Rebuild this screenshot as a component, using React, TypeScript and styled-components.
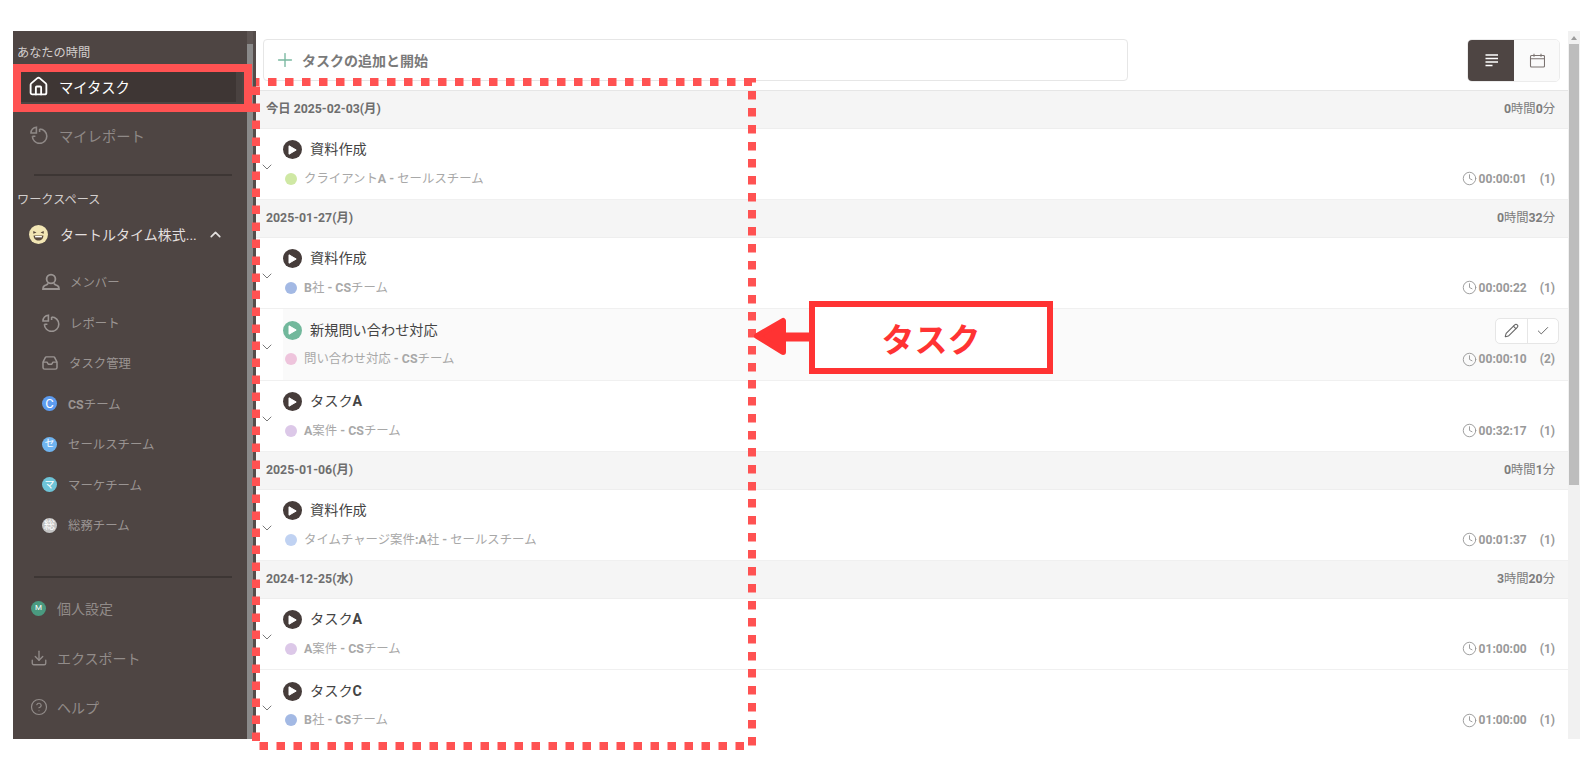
import React, { FC, ReactNode } from "react";
import styled, { createGlobalStyle } from "styled-components";
import { Check, ChevronDown, ChevronUp, CircleHelp, Clock, Download, Home, Pencil, Plus } from "lucide-react";

type Task = {
  title: string;
  project: string;
  dot: string;
  time: string;
  count: number;
  active?: boolean;
};

type Group = {
  date: string;
  total: string;
  tasks: Task[];
};

const groups: Group[] = [
  {
    date: "今日 2025-02-03(月)",
    total: "0時間0分",
    tasks: [{ title: "資料作成", project: "クライアントA - セールスチーム", dot: "#cfe8a4", time: "00:00:01", count: 1 }]
  },
  {
    date: "2025-01-27(月)",
    total: "0時間32分",
    tasks: [
      { title: "資料作成", project: "B社 - CSチーム", dot: "#a3b9e4", time: "00:00:22", count: 1 },
      { title: "新規問い合わせ対応", project: "問い合わせ対応 - CSチーム", dot: "#eec4dc", time: "00:00:10", count: 2, active: true },
      { title: "タスクA", project: "A案件 - CSチーム", dot: "#dcc8e8", time: "00:32:17", count: 1 }
    ]
  },
  {
    date: "2025-01-06(月)",
    total: "0時間1分",
    tasks: [{ title: "資料作成", project: "タイムチャージ案件:A社 - セールスチーム", dot: "#c0d2f2", time: "00:01:37", count: 1 }]
  },
  {
    date: "2024-12-25(水)",
    total: "3時間20分",
    tasks: [
      { title: "タスクA", project: "A案件 - CSチーム", dot: "#dcc8e8", time: "01:00:00", count: 1 },
      { title: "タスクC", project: "B社 - CSチーム", dot: "#a3b9e4", time: "01:00:00", count: 1 }
    ]
  }
];

const GlobalStyle = createGlobalStyle`
  html, body {
    margin: 0;
    padding: 0;
    background: #fff;
    overflow: hidden;
  }
  body {
    font-family: Roboto, "Noto Sans CJK JP", sans-serif;
  }
`;

const Page = styled.div`
  position: relative;
  width: 1587px;
  height: 774px;
  padding: 31px 7px 35px 13px;
  box-sizing: border-box;
  overflow: hidden;
`;

const Frame = styled.div`
  display: flex;
  height: 708px;
  overflow: hidden;
`;

const Sidebar = styled.aside`
  flex: none;
  display: flex;
  width: 243px;
  background: #4e4543;
  border-right: 3px solid #544c4a;
  box-sizing: border-box;
`;

const SidebarContent = styled.div`
  flex: none;
  width: 234px;
`;

const SidebarScroll = styled.div`
  flex: none;
  width: 6px;
  background: linear-gradient(#5d5553 13px, #8a8a8a 13px);
`;

const SectionLabel = styled.div<{ $top: number }>`
  height: 18px;
  margin-top: ${p => p.$top}px;
  padding-left: 4px;
  line-height: 18px;
  font-size: 12.2px;
  color: #d2cecd;
`;

const NavItem = styled.div<{ $active?: boolean }>`
  display: flex;
  align-items: center;
  gap: 12px;
  height: ${p => (p.$active ? 31 : 48)}px;
  margin: ${p => (p.$active ? "9px 0 9px" : "0")};
  padding-left: 17px;
  width: ${p => (p.$active ? "223px" : "auto")};
  box-sizing: border-box;
  font-size: 14.3px;
  color: ${p => (p.$active ? "#fff" : "#8f8987")};
  background: ${p => (p.$active ? "#3e3634" : "transparent")};
  box-shadow: ${p => (p.$active ? "6px 0 0 #4a4240" : "none")};
`;

const IconSlot = styled.span`
  flex: none;
  display: flex;
  align-items: center;
  justify-content: center;
  width: 17px;
  & > svg {
    flex: none;
  }
`;

const Divider = styled.div<{ $top: number }>`
  height: 2px;
  margin: ${p => p.$top}px 15px 0 21px;
  background: #3d3634;
`;

const TeamRow = styled.div`
  display: flex;
  align-items: center;
  height: 48px;
  margin-top: 1px;
  padding-left: 16px;
  font-size: 14px;
  color: #e2dfde;
`;

const TeamName = styled.span`
  margin-left: 12px;
  width: 147px;
  white-space: nowrap;
`;

const SubList = styled.div`
  margin-top: 4px;
`;

const SubItem = styled.div<{ $gap: number }>`
  display: flex;
  align-items: center;
  gap: ${p => p.$gap}px;
  height: 40.5px;
  padding-left: 29px;
  font-size: 12.4px;
  color: #9a9492;
`;

const BottomList = styled.div`
  margin-top: 6px;
`;

const BottomItem = styled.div`
  display: flex;
  align-items: center;
  gap: 10px;
  height: 49.5px;
  padding-left: 17px;
  font-size: 14px;
  color: #928c8a;
`;

const Badge = styled.span<{ $bg: string; $size?: number; $fs?: number }>`
  flex: none;
  display: flex;
  align-items: center;
  justify-content: center;
  width: ${p => p.$size ?? 15}px;
  height: ${p => p.$size ?? 15}px;
  border-radius: 50%;
  background: ${p => p.$bg};
  color: #fff;
  font-size: ${p => p.$fs ?? 10}px;
  line-height: 1;
`;

const Main = styled.main`
  flex: 1;
  min-width: 0;
  overflow: hidden;
`;

const Toolbar = styled.div`
  display: flex;
  align-items: flex-start;
  justify-content: space-between;
  height: 60px;
  padding: 8px 8px 0 7px;
  box-sizing: border-box;
  border-bottom: 1px solid #e6e6e6;
`;

const AddTask = styled.div`
  display: flex;
  align-items: center;
  gap: 6px;
  width: 865px;
  height: 42px;
  padding-left: 10px;
  box-sizing: border-box;
  border: 1px solid #e6e6e6;
  border-radius: 4px;
  font-size: 14px;
  font-weight: 700;
  color: #7a7a7a;
`;

const ViewToggle = styled.div`
  display: flex;
  width: 93px;
  height: 43px;
  border: 1px solid #ececec;
  border-radius: 5px;
  box-sizing: border-box;
  overflow: hidden;
`;

const ToggleButton = styled.div<{ $on?: boolean }>`
  flex: ${p => (p.$on ? "0 0 46px" : "1")};
  display: flex;
  align-items: center;
  justify-content: center;
  background: ${p => (p.$on ? "#4e4543" : "#fafafa")};
  color: ${p => (p.$on ? "#fff" : "#7a7270")};
`;

const GroupHeader = styled.div`
  display: flex;
  align-items: center;
  justify-content: space-between;
  height: 37.5px;
  padding: 0 13px 2px 10px;
  box-sizing: border-box;
  background: #f5f5f5;
  border-bottom: 1px solid #eeeeee;
  font-size: 12.3px;
  font-weight: 700;
  color: #6e6e6e;
`;

const GroupTotal = styled.span`
  font-weight: 400;
  color: #7c7c7c;
`;

const Latin = styled.span`
  font-weight: 700;
`;

const Row = styled.div`
  display: flex;
  height: 71.5px;
  box-sizing: border-box;
  border-bottom: 1px solid #f0f0f0;
`;

const Toggle = styled.div`
  flex: none;
  width: 27px;
  padding: 30px 0 0 3px;
  box-sizing: border-box;
  color: #7a7a7a;
`;

const RowBody = styled.div<{ $active?: boolean }>`
  flex: 1;
  min-width: 0;
  padding: 11px 13px 0 0;
  background: ${p => (p.$active ? "#fafafa" : "#fff")};
`;

const TitleLine = styled.div`
  display: flex;
  align-items: center;
  gap: 8px;
  height: 20px;
  font-size: 14.2px;
  color: #444;
`;

const TitleText = styled.span`
  padding-bottom: 3px;
`;

const PlayButton = styled.span<{ $bg: string }>`
  flex: none;
  display: flex;
  align-items: center;
  justify-content: center;
  width: 19px;
  height: 19px;
  border-radius: 50%;
  background: ${p => p.$bg};
`;

const RowActions = styled.div`
  display: flex;
  margin: 1px -4px 0 auto;
  width: 64px;
  height: 26px;
  box-sizing: border-box;
  border: 1px solid #e6e6e6;
  border-radius: 5px;
  background: #fff;
`;

const ActionCell = styled.span`
  flex: 1;
  display: flex;
  align-items: center;
  justify-content: center;
  color: #666;
  & + & {
    border-left: 1px solid #e6e6e6;
  }
`;

const SubLine = styled.div`
  display: flex;
  align-items: center;
  height: 20px;
  margin-top: 9px;
  font-size: 12.4px;
  color: #a8a8a8;
`;

const ProjectText = styled.span`
  padding-bottom: 2px;
`;

const Dot = styled.span<{ $color: string }>`
  flex: none;
  width: 12px;
  height: 12px;
  margin: 0 7px 0 2px;
  border-radius: 50%;
  background: ${p => p.$color};
`;

const Meta = styled.div`
  display: flex;
  align-items: center;
  margin-left: auto;
  font-size: 12px;
  font-weight: 700;
  color: #999;
`;

const Time = styled.span`
  margin-left: 2px;
`;

const Count = styled.span`
  margin-left: 13px;
`;

const Scrollbar = styled.div`
  flex: none;
  width: 12px;
  padding-left: 1px;
  box-sizing: border-box;
  background: #f1f1f1;
`;

const ScrollArrow = styled.div`
  width: 0;
  height: 0;
  margin: 5px 0 4px 2px;
  border-left: 3px solid transparent;
  border-right: 3px solid transparent;
  border-bottom: 4px solid #9c9c9c;
`;

const ScrollThumb = styled.div`
  width: 10px;
  height: 441px;
  background: #bdbdbd;
`;

const RedBox = styled.div`
  position: absolute;
  left: 13px;
  top: 64px;
  width: 239px;
  height: 48px;
  box-sizing: border-box;
  border: 8px solid #ff5252;
`;

const Overlay = styled.svg`
  position: absolute;
  left: 0;
  top: 0;
  pointer-events: none;
`;

const Callout = styled.div`
  position: absolute;
  left: 809px;
  top: 301px;
  display: flex;
  align-items: center;
  justify-content: center;
  width: 244px;
  height: 73px;
  box-sizing: border-box;
  border: 6px solid #ff3333;
  background: #fff;
  font-size: 33px;
  font-weight: 700;
  color: #ff3333;
`;

// digits and latin letters are heavier than the kana next to them
const Mixed: FC<{ text: string }> = ({ text }) => (
  <>
    {text.split(/([A-Za-z0-9:-]+)/).map((part, i) => (i % 2 === 1 ? <Latin key={i}>{part}</Latin> : part))}
  </>
);

const ReportIcon: FC = () => (
  <svg width="18" height="18" viewBox="0 0 18 18" fill="none" stroke="currentColor" strokeWidth="1.6">
    <path d="M9.6 3a7.2 7.2 0 1 1-7.2 7.2" />
    <path d="M6.4 1.2v5.8H1a5.6 5.6 0 0 1 5.4-5.8z" />
    <path d="M9.6 3v3M2.4 10.2h3" />
  </svg>
);

const MemberIcon = () => (
  <svg width="18" height="18" viewBox="0 0 18 18" fill="none" stroke="currentColor" strokeWidth="1.8">
    <circle cx="9" cy="6" r="4.4" />
    <path d="M6 10.2c-.4 1.6-2.2 1.8-3.6 2.6-.9.6-1.4 1.6-1.4 3.2h16c0-1.6-.5-2.6-1.4-3.2-1.4-.8-3.2-1-3.6-2.6" />
  </svg>
);

const InboxIcon = () => (
  <svg width="16" height="14" viewBox="0 0 18 16" fill="none" stroke="currentColor" strokeWidth="1.7" strokeLinejoin="round">
    <path d="M1 7l2.6-5.2a1.4 1.4 0 0 1 1.2-.8h8.4a1.4 1.4 0 0 1 1.2.8L17 7v6a2 2 0 0 1-2 2H3a2 2 0 0 1-2-2z" />
    <path d="M1 7h4.6l1.4 2.4h4L12.4 7H17" />
  </svg>
);

const FaceIcon = () => (
  <svg width="19" height="19" viewBox="0 0 20 20">
    <circle cx="10" cy="10" r="10" fill="#f2e6b4" />
    <path d="M4.5 6.2l3.4 1.8-3.4 1.2zM15.5 6.2l-3.4 1.8 3.4 1.2z" fill="#5a4a3c" />
    <path d="M4.8 11h10.4c0 3.2-2.3 5.4-5.2 5.4S4.8 14.2 4.8 11z" fill="#5a4a3c" />
    <path d="M6.4 11.6h7.2v1.4H6.4z" fill="#fff" />
  </svg>
);

const ListIcon = () => (
  <svg width="15" height="15" viewBox="0 0 15 15" stroke="currentColor" strokeWidth="1.3">
    <path d="M1.5 2h12.5M1.5 5.5h12.5M1.5 9h12.5M1.5 12.5h7" />
  </svg>
);

const CalendarIcon = () => (
  <svg width="16" height="15" viewBox="0 0 16 15" fill="none" stroke="currentColor" strokeWidth="1.1">
    <rect x="1.5" y="2.5" width="14" height="11.5" rx="1" />
    <path d="M1.5 5.8h14M5 .8v3M12 .8v3" />
  </svg>
);

const PlayIcon = () => (
  <svg width="9" height="10" viewBox="0 0 9 10">
    <path d="M1 .8l7.2 4.2L1 9.2z" fill="#fff" stroke="#fff" strokeWidth="1" strokeLinejoin="round" />
  </svg>
);

const Sub: FC<{ gap?: number; icon: ReactNode; label: string }> = ({ gap = 11, icon, label }) => (
  <SubItem $gap={gap}>
    {icon}
    <span>
      <Mixed text={label} />
    </span>
  </SubItem>
);

const TaskRow: FC<{ task: Task }> = ({ task }) => (
  <Row>
    <Toggle>
      <ChevronDown size={16} strokeWidth={1.5} />
    </Toggle>
    <RowBody $active={task.active}>
      <TitleLine>
        <PlayButton $bg={task.active ? "#72b89c" : "#463c3a"}>
          <PlayIcon />
        </PlayButton>
        <TitleText>
          <Mixed text={task.title} />
        </TitleText>
        {task.active && (
          <RowActions>
            <ActionCell>
              <Pencil size={15} strokeWidth={1.7} />
            </ActionCell>
            <ActionCell>
              <Check size={14} strokeWidth={1.7} />
            </ActionCell>
          </RowActions>
        )}
      </TitleLine>
      <SubLine>
        <Dot $color={task.dot} />
        <ProjectText>
          <Mixed text={task.project} />
        </ProjectText>
        <Meta>
          <Clock size={15} strokeWidth={1.5} />
          <Time>{task.time}</Time>
          <Count>({task.count})</Count>
        </Meta>
      </SubLine>
    </RowBody>
  </Row>
);

const App: FC = () => (
  <Page>
    <GlobalStyle />
    <Frame>
      <Sidebar>
        <SidebarContent>
          <SectionLabel $top={13}>あなたの時間</SectionLabel>
          <NavItem $active={true}>
            <IconSlot>
              <Home size={21} strokeWidth={2.1} />
            </IconSlot>
            <span>マイタスク</span>
          </NavItem>
          <NavItem>
            <IconSlot>
              <ReportIcon />
            </IconSlot>
            <span>マイレポート</span>
          </NavItem>
          <Divider $top={15} />
          <SectionLabel $top={15}>ワークスペース</SectionLabel>
          <TeamRow>
            <FaceIcon />
            <TeamName>タートルタイム株式...</TeamName>
            <ChevronUp size={17} strokeWidth={2.4} />
          </TeamRow>
          <SubList>
            <Sub gap={10} icon={<MemberIcon />} label="メンバー" />
            <Sub gap={10} icon={<ReportIcon />} label="レポート" />
            <Sub icon={<InboxIcon />} label="タスク管理" />
            <Sub icon={<Badge $bg="#5d9cf0" $fs={13}>C</Badge>} label="CSチーム" />
            <Sub icon={<Badge $bg="#6fb4f0">セ</Badge>} label="セールスチーム" />
            <Sub icon={<Badge $bg="#6ec4d8">マ</Badge>} label="マーケチーム" />
            <Sub icon={<Badge $bg="#c4c4c4" $fs={11}>総</Badge>} label="総務チーム" />
          </SubList>
          <Divider $top={30} />
          <BottomList>
            <BottomItem>
              <IconSlot>
                <Badge $bg="#4a9a80" $fs={8}>M</Badge>
              </IconSlot>
              <span>個人設定</span>
            </BottomItem>
            <BottomItem>
              <IconSlot>
                <Download size={18} strokeWidth={1.8} />
              </IconSlot>
              <span>エクスポート</span>
            </BottomItem>
            <BottomItem>
              <IconSlot>
                <CircleHelp size={18} strokeWidth={1.6} />
              </IconSlot>
              <span>ヘルプ</span>
            </BottomItem>
          </BottomList>
        </SidebarContent>
        <SidebarScroll />
      </Sidebar>
      <Main>
        <Toolbar>
          <AddTask>
            <Plus size={22} strokeWidth={1.5} color="#7ab8a0" />
            <span>タスクの追加と開始</span>
          </AddTask>
          <ViewToggle>
            <ToggleButton $on={true}>
              <ListIcon />
            </ToggleButton>
            <ToggleButton>
              <CalendarIcon />
            </ToggleButton>
          </ViewToggle>
        </Toolbar>
        {groups.map(group => (
          <div key={group.date}>
            <GroupHeader>
              <span>{group.date}</span>
              <GroupTotal>
                <Mixed text={group.total} />
              </GroupTotal>
            </GroupHeader>
            {group.tasks.map((task, i) => (
              <TaskRow key={i} task={task} />
            ))}
          </div>
        ))}
      </Main>
      <Scrollbar>
        <ScrollArrow />
        <ScrollThumb />
      </Scrollbar>
    </Frame>

    <RedBox />
    <Overlay width="1587" height="774" viewBox="0 0 1587 774">
      <rect x="256" y="82" width="496" height="664" fill="none" stroke="#ff5252" strokeWidth="8" strokeDasharray="8.5 8.5" strokeDashoffset="5" />
      <path d="M809 337H780" stroke="#ff3333" strokeWidth="9" />
      <path d="M757 336L783 321V352Z" fill="#ff3333" stroke="#ff3333" strokeWidth="6" strokeLinejoin="round" />
    </Overlay>
    <Callout>タスク</Callout>
  </Page>
);

export default App;
